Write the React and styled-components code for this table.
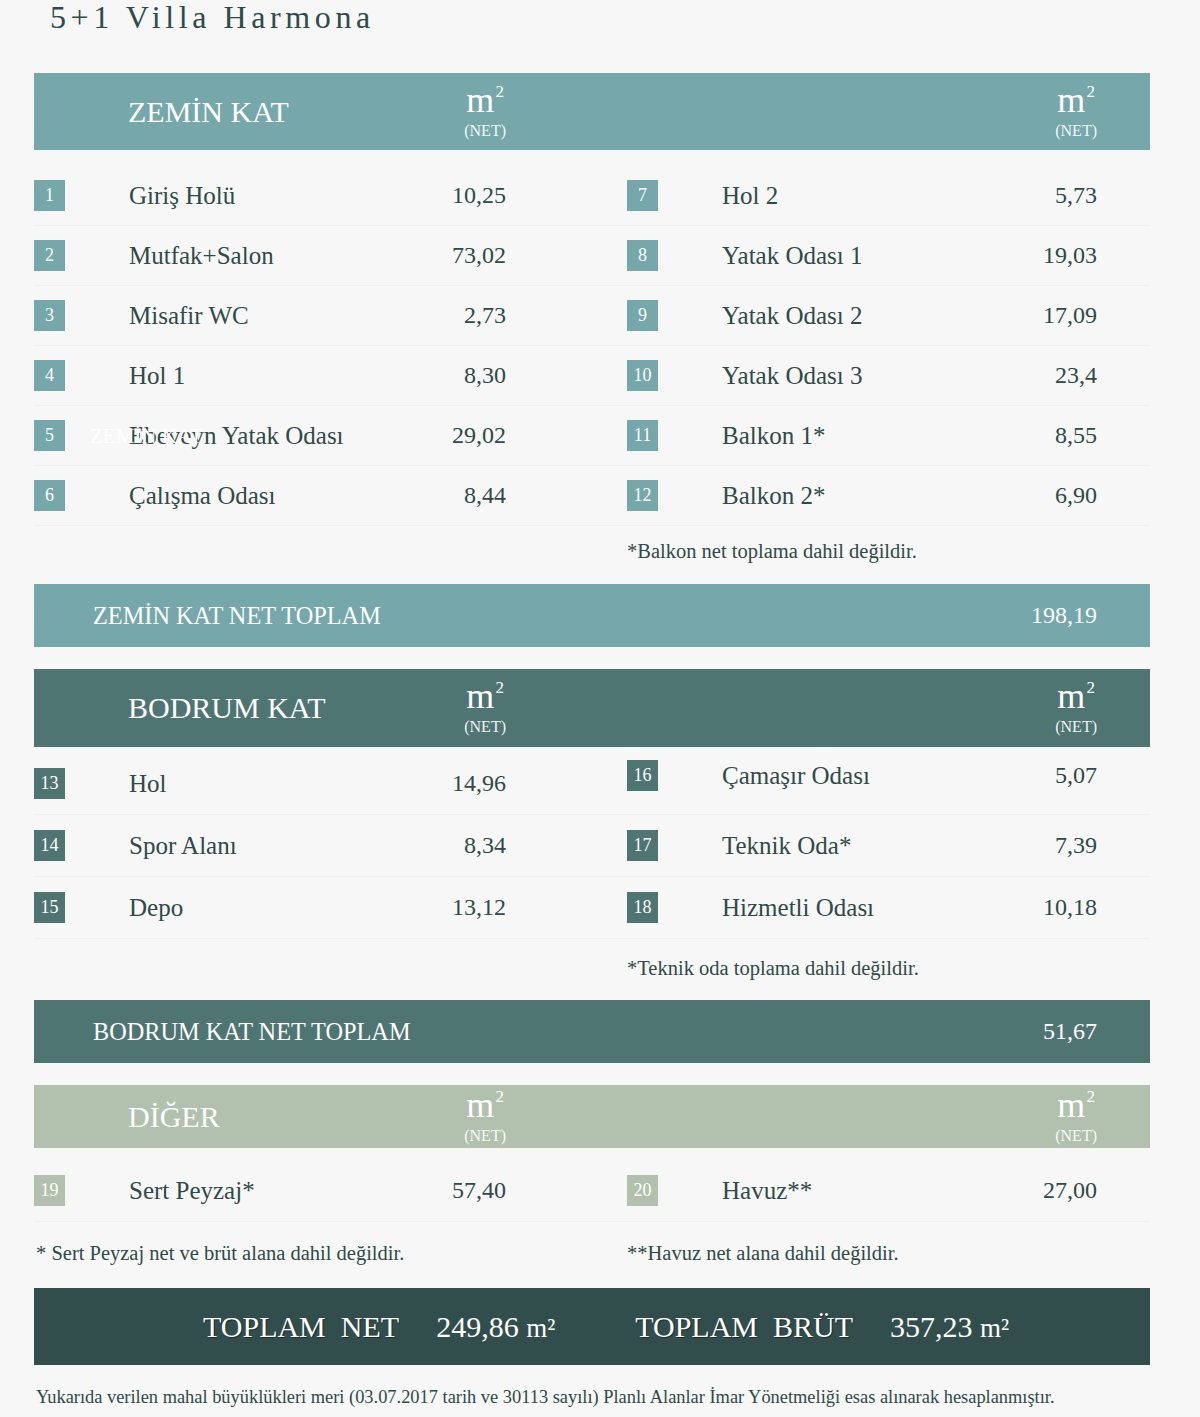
import styled, { createGlobalStyle } from 'styled-components'

const GlobalStyle = createGlobalStyle`
  html, body {
    margin: 0;
    padding: 0;
    background: #f7f7f7;
  }
  body {
    font-family: "Liberation Serif", "Times New Roman", serif;
    color: #2f4a48;
  }
`

const colors = {
  zemin: '#76a7aa',
  bodrum: '#4f7573',
  diger: '#b1c1ae',
  total: '#324e4c'
}

const sections = [
  {
    key: 'zemin',
    title: 'ZEMİN KAT',
    headH: 77,
    listTop: 16,
    rowH: 60,
    left: [
      ['1', 'Giriş Holü', '10,25'],
      ['2', 'Mutfak+Salon', '73,02'],
      ['3', 'Misafir WC', '2,73'],
      ['4', 'Hol 1', '8,30'],
      ['5', 'Ebeveyn Yatak Odası', '29,02', true],
      ['6', 'Çalışma Odası', '8,44']
    ],
    right: [
      ['7', 'Hol 2', '5,73'],
      ['8', 'Yatak Odası 1', '19,03'],
      ['9', 'Yatak Odası 2', '17,09'],
      ['10', 'Yatak Odası 3', '23,4'],
      ['11', 'Balkon 1*', '8,55'],
      ['12', 'Balkon 2*', '6,90']
    ],
    notes: ['', '*Balkon net toplama dahil değildir.'],
    noteH: 58,
    noteTop: 13,
    total: ['ZEMİN KAT NET TOPLAM', '198,19']
  },
  {
    key: 'bodrum',
    title: 'BODRUM KAT',
    headH: 78,
    listTop: 6,
    rowH: 62,
    left: [
      ['13', 'Hol', '14,96'],
      ['14', 'Spor Alanı', '8,34'],
      ['15', 'Depo', '13,12']
    ],
    right: [
      ['16', 'Çamaşır Odası', '5,07', false, -8],
      ['17', 'Teknik Oda*', '7,39'],
      ['18', 'Hizmetli Odası', '10,18']
    ],
    notes: ['', '*Teknik oda toplama dahil değildir.'],
    noteH: 61,
    noteTop: 17,
    total: ['BODRUM KAT NET TOPLAM', '51,67']
  },
  {
    key: 'diger',
    title: 'DİĞER',
    headH: 63,
    listTop: 12,
    rowH: 62,
    left: [['19', 'Sert Peyzaj*', '57,40']],
    right: [['20', 'Havuz**', '27,00']],
    notes: ['* Sert Peyzaj net ve brüt alana dahil değildir.', '**Havuz net alana dahil değildir.'],
    noteH: 66,
    noteTop: 19
  }
]

const Unit = () => (
  <UnitBox>
    <UnitM>m<Sup>2</Sup></UnitM>
    <UnitNet>(NET)</UnitNet>
  </UnitBox>
)

const Column = ({ items, edge, color, rowH }) => (
  <ColumnBox>
    {items.map(([no, name, value, ghost, shift]) => (
      <Row key={no} $h={rowH} $edge={edge} $shift={shift || 0}>
        <Badge $color={color}>{no}</Badge>
        <Name>{name}</Name>
        <Value>{value}</Value>
        {ghost && <Ghost>ZEMİN KAT</Ghost>}
      </Row>
    ))}
  </ColumnBox>
)

const Section = ({ data }) => {
  const color = colors[data.key]
  return (
    <SectionBox>
      <HeadBar $color={color} $h={data.headH}>
        <HeadCell $edge={121}>
          <HeadTitle>{data.title}</HeadTitle>
          <Unit />
        </HeadCell>
        <HeadCell $edge={53}>
          <span />
          <Unit />
        </HeadCell>
      </HeadBar>

      <Grid $top={data.listTop}>
        <Column items={data.left} edge={121} color={color} rowH={data.rowH} />
        <Column items={data.right} edge={53} color={color} rowH={data.rowH} />
      </Grid>

      <Grid>
        {data.notes.map((n, i) => (
          <Note key={i} $h={data.noteH} $top={data.noteTop} $indent={i === 0 ? 2 : 0}>
            {n}
          </Note>
        ))}
      </Grid>

      {data.total && (
        <TotalBar $color={color}>
          <TotalLabel>{data.total[0]}</TotalLabel>
          <TotalValue>{data.total[1]}</TotalValue>
        </TotalBar>
      )}
    </SectionBox>
  )
}

const App = () => {
  return (
    <>
      <GlobalStyle />
      <Page>
        <Title>5+1 Villa Harmona</Title>

        {sections.map((s) => (
          <Section key={s.key} data={s} />
        ))}

        <GrandBar>
          <GrandGroup>
            <GrandLabel>{'TOPLAM  NET'}</GrandLabel>
            <GrandValue>249,86 <small>m²</small></GrandValue>
          </GrandGroup>
          <GrandGroup>
            <GrandLabel>{'TOPLAM  BRÜT'}</GrandLabel>
            <GrandValue>357,23 <small>m²</small></GrandValue>
          </GrandGroup>
        </GrandBar>

        <Footer>
          Yukarıda verilen mahal büyüklükleri meri (03.07.2017 tarih ve 30113 sayılı) Planlı Alanlar İmar Yönetmeliği esas alınarak hesaplanmıştır.
        </Footer>
      </Page>
    </>
  )
}

const Page = styled.div`
  width: 1116px;
  padding: 0 50px 0 34px;
  min-height: 1417px;
  box-sizing: content-box;
`

const Title = styled.h1`
  margin: 1px 0 40px 16px;
  font-weight: 400;
  font-size: 32px;
  line-height: 32px;
  letter-spacing: 4.6px;
  color: #2e4b49;
`

const SectionBox = styled.section`
  margin-bottom: 22px;
`

const HeadBar = styled.div`
  display: grid;
  grid-template-columns: 593px 523px;
  height: ${({ $h }) => $h}px;
  background: ${({ $color }) => $color};
  color: #fff;
`

const HeadCell = styled.div`
  display: flex;
  align-items: center;
  justify-content: space-between;
  padding: 0 ${({ $edge }) => $edge}px 0 94px;
`

const HeadTitle = styled.span`
  font-size: 30px;
  line-height: 1;
`

const UnitBox = styled.div`
  display: flex;
  flex-direction: column;
  align-items: center;
  padding-top: 2px;
`

const UnitM = styled.span`
  font-size: 36px;
  line-height: 28px;
`

const Sup = styled.span`
  position: relative;
  top: -15px;
  margin-left: 1px;
  font-size: 17px;
`

const UnitNet = styled.span`
  margin-top: 1px;
  font-size: 16px;
  line-height: 18px;
  opacity: 0.92;
`

const Grid = styled.div`
  display: grid;
  grid-template-columns: 593px 523px;
  padding-top: ${({ $top }) => $top || 0}px;
`

const ColumnBox = styled.div`
  display: flex;
  flex-direction: column;
`

const Row = styled.div`
  position: relative;
  display: flex;
  align-items: center;
  height: ${({ $h }) => $h}px;
  padding-right: ${({ $edge }) => $edge}px;
  padding-bottom: ${({ $shift }) => -$shift * 2}px;
  box-sizing: border-box;
  border-bottom: 1px solid #efefef;
`

const Badge = styled.span`
  flex: 0 0 31px;
  height: 31px;
  display: flex;
  align-items: center;
  justify-content: center;
  background: ${({ $color }) => $color};
  color: #fff;
  font-size: 18px;
`

const Name = styled.span`
  flex: 1;
  margin-left: 64px;
  font-size: 25px;
`

const Value = styled.span`
  font-size: 24px;
`

const Ghost = styled.span`
  position: absolute;
  left: 56px;
  top: 50%;
  transform: translateY(-50%);
  font-size: 21px;
  color: #fff;
  pointer-events: none;
`

const Note = styled.div`
  height: ${({ $h }) => $h}px;
  padding-top: ${({ $top }) => $top}px;
  padding-left: ${({ $indent }) => $indent}px;
  box-sizing: border-box;
  font-size: 20.5px;
  line-height: 24px;
`

const TotalBar = styled.div`
  display: flex;
  align-items: center;
  justify-content: space-between;
  height: 63px;
  padding: 0 53px 0 59px;
  background: ${({ $color }) => $color};
  color: #fff;
`

const TotalLabel = styled.span`
  font-size: 24.3px;
`

const TotalValue = styled.span`
  font-size: 24px;
`

const GrandBar = styled.div`
  display: flex;
  align-items: center;
  gap: 80px;
  height: 77px;
  margin-top: -22px;
  padding-left: 169px;
  background: ${colors.total};
  color: #fff;
`

const GrandGroup = styled.div`
  display: flex;
  align-items: baseline;
  gap: 37px;
`

const GrandLabel = styled.span`
  font-size: 30px;
  white-space: pre;
  text-shadow: 1px 1px 1px rgba(0, 0, 0, 0.45);
`

const GrandValue = styled.span`
  font-size: 30px;

  small {
    font-size: 27px;
  }
`

const Footer = styled.p`
  margin: 0;
  padding: 20px 0 0 2px;
  font-size: 18.4px;
  line-height: 24px;
  white-space: nowrap;
`

export default App
